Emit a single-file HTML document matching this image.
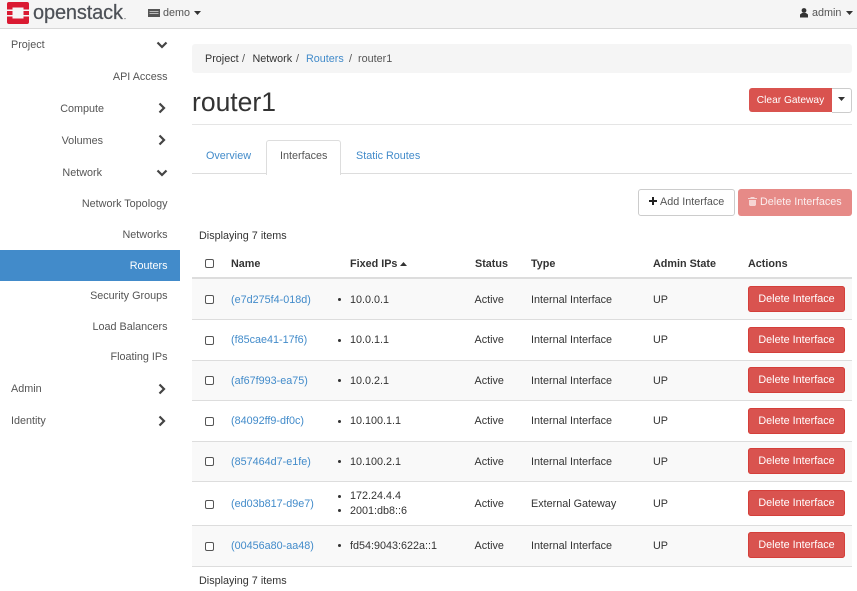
<!DOCTYPE html>
<html><head><meta charset="utf-8"><style>
html,body{margin:0;padding:0;background:#fff}
body{width:857px;height:591px;overflow:hidden;position:relative;font-family:"Liberation Sans",Arial,sans-serif;font-size:10.8px;color:#333;filter:blur(.3px)}
.t{position:absolute;white-space:nowrap;line-height:14px;margin-top:1px}
.b{position:absolute}
.r{text-align:right}
.s{color:#555}
.l{color:#428bca}
.h{font-weight:bold}
.btn{position:absolute;left:748px;width:97px;height:26px;background:#d9534f;border-radius:3px;color:#fff;text-align:center;line-height:27px;box-shadow:inset 0 0 0 1px #d43f3a}
.row{position:absolute;left:192px;width:660px;background:#f9f9f9;border-bottom:1px solid #ddd}
.cb{position:absolute;left:204.500px;width:7px;height:6.500px;border:1px solid #555;border-radius:2px;background:#fff}
.dot{position:absolute;left:338px;width:3px;height:3px;border-radius:50%;background:#333}
svg{position:absolute}
</style></head><body>
<div class="b" style="left:0;top:0;width:857px;height:28px;background:#f5f5f5;border-bottom:1px solid #d8d8d8"></div>
<svg style="left:6.500px;top:2px" width="22" height="22" viewBox="0 0 22 22"><rect width="22" height="22" rx="2" fill="#da1a32"/><rect x="5.500" y="5.500" width="11" height="11" fill="#f5f5f5"/><rect x="0" y="7.500" width="6" height="1.500" fill="#f5f5f5"/><rect x="0" y="13" width="6" height="1.500" fill="#f5f5f5"/><rect x="16" y="7.500" width="6" height="1.500" fill="#f5f5f5"/><rect x="16" y="13" width="6" height="1.500" fill="#f5f5f5"/></svg>
<div class="t" style="left:33px;top:1px;font-size:20px;line-height:22px;color:#4d5157;-webkit-text-stroke:.2px #4d5157;letter-spacing:-.15px">openstack<span style="font-size:8px;margin-left:1px">.</span></div>
<svg style="left:148px;top:8px" width="12" height="10" viewBox="0 0 12 10"><path fill="#555" d="M0 1h12v8H0z"/><path fill="#bbb" d="M1.500 3h9v1h-9zM1.500 5h9v1h-9z"/></svg>
<div class="t s" style="left:163px;top:5px">demo</div>
<svg style="left:194px;top:11px" width="7" height="4"><path fill="#333" d="M0 0h7L3.500 4z"/></svg>
<svg style="left:800px;top:8px" width="8" height="10" viewBox="0 0 8 10"><circle cx="4" cy="2.500" r="2.400" fill="#333"/><path fill="#333" d="M0 9.500V6.500L2 5h4l2 1.500v3z"/></svg>
<div class="t s" style="left:812px;top:5px">admin</div>
<svg style="left:846px;top:11px" width="7" height="4"><path fill="#333" d="M0 0h7L3.500 4z"/></svg>

<div class="t s" style="left:11px;top:37px">Project</div>
<div class="t s r" style="right:689.500px;top:69px">API Access</div>
<div class="t s r" style="right:753px;top:101px">Compute</div>
<div class="t s r" style="right:754px;top:133px">Volumes</div>
<div class="t s r" style="right:755px;top:165px">Network</div>
<div class="t s r" style="right:689.500px;top:196px">Network Topology</div>
<div class="t s r" style="right:689.500px;top:227px">Networks</div>
<div class="b" style="left:0;top:250px;width:180px;height:31px;background:#428bca"></div>
<div class="t r" style="right:689.500px;top:258px;color:#fff">Routers</div>
<div class="t s r" style="right:689.500px;top:288px">Security Groups</div>
<div class="t s r" style="right:689.500px;top:319px">Load Balancers</div>
<div class="t s r" style="right:689.500px;top:349px">Floating IPs</div>
<div class="t s" style="left:11px;top:381px">Admin</div>
<div class="t s" style="left:11px;top:413px">Identity</div>
<svg style="left:156px;top:41px" width="12" height="8"><path d="M1.500 1.500L6 6l4.500-4.500" fill="none" stroke="#444" stroke-width="2.200"/></svg>
<svg style="left:156px;top:169px" width="12" height="8"><path d="M1.500 1.500L6 6l4.500-4.500" fill="none" stroke="#444" stroke-width="2.200"/></svg>
<svg style="left:158px;top:102px" width="8" height="12"><path d="M1.500 1.500L6 6l-4.500 4.500" fill="none" stroke="#444" stroke-width="2.200"/></svg>
<svg style="left:158px;top:134px" width="8" height="12"><path d="M1.500 1.500L6 6l-4.500 4.500" fill="none" stroke="#444" stroke-width="2.200"/></svg>
<svg style="left:158px;top:383px" width="8" height="12"><path d="M1.500 1.500L6 6l-4.500 4.500" fill="none" stroke="#444" stroke-width="2.200"/></svg>
<svg style="left:158px;top:415px" width="8" height="12"><path d="M1.500 1.500L6 6l-4.500 4.500" fill="none" stroke="#444" stroke-width="2.200"/></svg>

<div class="b" style="left:192px;top:44px;width:660px;height:29px;background:#f5f5f5;border-radius:3px"></div>
<div class="t" style="left:205px;top:51px">Project</div>
<div class="t s" style="left:242px;top:51px">/</div>
<div class="t" style="left:252.500px;top:51px">Network</div>
<div class="t s" style="left:296px;top:51px">/</div>
<div class="t l" style="left:306px;top:51px">Routers</div>
<div class="t s" style="left:349px;top:51px">/</div>
<div class="t s" style="left:358px;top:51px">router1</div>
<div class="t" style="left:192px;top:87px;font-size:26.500px;line-height:30px;margin:0">router1</div>
<div class="b" style="left:192px;top:124px;width:660px;height:1px;background:#e5e5e5"></div>
<div class="b" style="left:749px;top:88px;width:83px;height:24px;background:#d9534f;border-radius:3px 0 0 3px;color:#fff;text-align:center;line-height:26px;font-size:10.200px">Clear Gateway</div>
<div class="b" style="left:832px;top:88px;width:19px;height:23px;background:#fff;border:1px solid #ccc;border-left:0;border-radius:0 3px 3px 0"></div>
<svg style="left:838px;top:97px" width="7" height="4"><path fill="#333" d="M0 0h7L3.500 4z"/></svg>

<div class="b" style="left:192px;top:173px;width:660px;height:1px;background:#ddd"></div>
<div class="b" style="left:266px;top:140px;width:73px;height:34px;background:#fff;border:1px solid #ddd;border-bottom:0;border-radius:3px 3px 0 0"></div>
<div class="t l" style="left:206px;top:148px">Overview</div>
<div class="t s" style="left:280px;top:148px">Interfaces</div>
<div class="t l" style="left:356px;top:148px">Static Routes</div>

<div class="b" style="left:638px;top:188.500px;width:95px;height:25px;background:#fff;border:1px solid #ccc;border-radius:3px"></div>
<svg style="left:649px;top:197px" width="8" height="8"><path fill="#222" d="M3 0h2v3h3v2H5v3H3V5H0V3h3z"/></svg>
<div class="t s" style="left:660px;top:194px">Add Interface</div>
<div class="b" style="left:738px;top:188.500px;width:114px;height:27px;background:#e68a87;border-radius:3px"></div>
<svg style="left:748px;top:197px" width="9" height="9" viewBox="0 0 9 9"><path fill="#f6d5d4" d="M3 0h3l1 1h2v1H0V1h2zM1 3h7v5l-1 1H2L1 8z"/></svg>
<div class="t" style="left:760px;top:194px;color:#fbeeee">Delete Interfaces</div>

<div class="t" style="left:199px;top:228px">Displaying 7 items</div>
<div class="b" style="left:192px;top:277px;width:660px;height:2px;background:#ddd"></div>
<div class="cb" style="top:259px"></div>
<div class="t h" style="left:231px;top:256px">Name</div>
<div class="t h" style="left:350px;top:256px">Fixed IPs</div>
<svg style="left:400px;top:262px" width="7" height="4"><path fill="#333" d="M0 4h7L3.500 0z"/></svg>
<div class="t h" style="left:475px;top:256px">Status</div>
<div class="t h" style="left:531px;top:256px">Type</div>
<div class="t h" style="left:653px;top:256px">Admin State</div>
<div class="t h" style="left:748px;top:256px">Actions</div>

<div class="row" style="top:279px;height:40px"></div>
<div class="row" style="top:320px;height:40px;background:#fff"></div>
<div class="row" style="top:361px;height:39px"></div>
<div class="row" style="top:401px;height:40px;background:#fff"></div>
<div class="row" style="top:442px;height:39px"></div>
<div class="row" style="top:482px;height:43px;background:#fff"></div>
<div class="row" style="top:526px;height:40px"></div>

<div class="cb" style="top:295px"></div><div class="t l" style="left:231px;top:292px">(e7d275f4-018d)</div><div class="dot" style="top:298px"></div><div class="t" style="left:350px;top:292px">10.0.0.1</div><div class="t" style="left:474.500px;top:292px">Active</div><div class="t" style="left:531px;top:292px">Internal Interface</div><div class="t" style="left:653px;top:292px">UP</div><div class="btn" style="top:286px">Delete Interface</div>
<div class="cb" style="top:336px"></div><div class="t l" style="left:231px;top:332px">(f85cae41-17f6)</div><div class="dot" style="top:339px"></div><div class="t" style="left:350px;top:332px">10.0.1.1</div><div class="t" style="left:474.500px;top:332px">Active</div><div class="t" style="left:531px;top:332px">Internal Interface</div><div class="t" style="left:653px;top:332px">UP</div><div class="btn" style="top:327px">Delete Interface</div>
<div class="cb" style="top:376px"></div><div class="t l" style="left:231px;top:373px">(af67f993-ea75)</div><div class="dot" style="top:379px"></div><div class="t" style="left:350px;top:373px">10.0.2.1</div><div class="t" style="left:474.500px;top:373px">Active</div><div class="t" style="left:531px;top:373px">Internal Interface</div><div class="t" style="left:653px;top:373px">UP</div><div class="btn" style="top:367px">Delete Interface</div>
<div class="cb" style="top:417px"></div><div class="t l" style="left:231px;top:413px">(84092ff9-df0c)</div><div class="dot" style="top:420px"></div><div class="t" style="left:350px;top:413px">10.100.1.1</div><div class="t" style="left:474.500px;top:413px">Active</div><div class="t" style="left:531px;top:413px">Internal Interface</div><div class="t" style="left:653px;top:413px">UP</div><div class="btn" style="top:408px">Delete Interface</div>
<div class="cb" style="top:457px"></div><div class="t l" style="left:231px;top:454px">(857464d7-e1fe)</div><div class="dot" style="top:460px"></div><div class="t" style="left:350px;top:454px">10.100.2.1</div><div class="t" style="left:474.500px;top:454px">Active</div><div class="t" style="left:531px;top:454px">Internal Interface</div><div class="t" style="left:653px;top:454px">UP</div><div class="btn" style="top:448px">Delete Interface</div>
<div class="cb" style="top:500px"></div><div class="t l" style="left:231px;top:496px">(ed03b817-d9e7)</div><div class="dot" style="top:495px"></div><div class="t" style="left:350px;top:488px">172.24.4.4</div><div class="dot" style="top:509px"></div><div class="t" style="left:350px;top:503px">2001:db8::6</div><div class="t" style="left:474.500px;top:496px">Active</div><div class="t" style="left:531px;top:496px">External Gateway</div><div class="t" style="left:653px;top:496px">UP</div><div class="btn" style="top:490px">Delete Interface</div>
<div class="cb" style="top:542px"></div><div class="t l" style="left:231px;top:538px">(00456a80-aa48)</div><div class="dot" style="top:544px"></div><div class="t" style="left:350px;top:538px">fd54:9043:622a::1</div><div class="t" style="left:474.500px;top:538px">Active</div><div class="t" style="left:531px;top:538px">Internal Interface</div><div class="t" style="left:653px;top:538px">UP</div><div class="btn" style="top:532px">Delete Interface</div>
<div class="t" style="left:199px;top:573px">Displaying 7 items</div>
</body></html>
